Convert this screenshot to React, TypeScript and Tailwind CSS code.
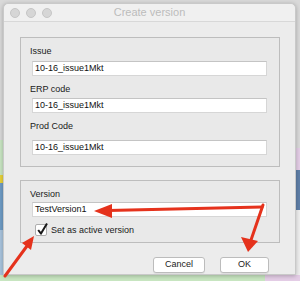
import React from "react";

const font = { fontFamily: '"Liberation Sans", Arial, sans-serif' };

function Field({ label, value, labelMt, inputMt }: { label: string; value: string; labelMt: string; inputMt: string }) {
  return (
    <div className="flex flex-col">
      <div className={`${labelMt} ml-[9px] h-[11px] text-[9px] leading-[11px] text-[#1a1a1a]`}>{label}</div>
      <div className={`${inputMt} ml-[11px] w-[235px] h-[15px] bg-white border border-[#d6d6d6] border-t-[#c4c4c4] flex items-center pl-[2px] text-[9px] leading-[11px] text-[#111]`}>
        {value}
      </div>
    </div>
  );
}

export default function App() {
  return (
    <div className="relative w-[300px] h-[281px] overflow-hidden bg-[#d9d9d9]" style={font}>
      {/* desktop wallpaper fragments */}
      <div className="absolute left-0 top-[140px] w-[4px] h-[35px] bg-[#c9e6c3]" />
      <div className="absolute left-0 top-[175px] w-[4px] h-[8px] bg-[#e8d23a]" />
      <div className="absolute left-0 top-[183px] w-[4px] h-[98px] bg-[#6f9cc6]" />
      <div className="absolute left-0 top-[230px] w-[4px] h-[51px] bg-[#a9c4dd]" />
      <div className="absolute left-0 top-[275px] w-[300px] h-[6px] bg-[#c8e6c1]" />
      <div className="absolute left-[265px] top-[275px] w-[35px] h-[6px] bg-[#e4cde6]" />
      <div className="absolute left-[296px] top-[148px] w-[4px] h-[22px] bg-[#e4cde6]" />
      <div className="absolute left-[296px] top-[170px] w-[4px] h-[40px] bg-[#5f7fa8]" />
      <div className="absolute left-[296px] top-[210px] w-[4px] h-[65px] bg-[#eeeeee]" />

      {/* window */}
      <div className="relative z-10 ml-[3px] mt-[3px] w-[293px] h-[272px] bg-[#ececec] border border-[#c9c9c9] rounded-t-[5px] shadow-[0_1px_4px_rgba(0,0,0,0.25)] flex flex-col">
        <div className="relative h-[18px] border-b border-[#d8d8d8] bg-[#f0f0f0] rounded-t-[5px] flex items-center">
          <div className="flex gap-[6px] ml-[6px]">
            <div className="w-[10px] h-[10px] rounded-full bg-[#d6d6d6] border border-[#c6c6c6]" />
            <div className="w-[10px] h-[10px] rounded-full bg-[#d6d6d6] border border-[#c6c6c6]" />
            <div className="w-[10px] h-[10px] rounded-full bg-[#d6d6d6] border border-[#c6c6c6]" />
          </div>
          <div className="absolute inset-0 flex items-center justify-center text-[11px] text-[#bcbcbc]">Create version</div>
        </div>

        <div className="flex flex-col pl-[16px]">
          {/* box 1 */}
          <div className="mt-[15px] w-[260px] h-[130px] border border-[#bdbdbd] bg-[#e9e9e9] flex flex-col">
            <Field label="Issue" value="10-16_issue1Mkt" labelMt="mt-[8px]" inputMt="mt-[4px]" />
            <Field label="ERP code" value="10-16_issue1Mkt" labelMt="mt-[8px]" inputMt="mt-[3px]" />
            <Field label="Prod Code" value="10-16_issue1Mkt" labelMt="mt-[8px]" inputMt="mt-[8px]" />
          </div>

          {/* box 2 */}
          <div className="mt-[13px] w-[260px] h-[63px] border border-[#bdbdbd] bg-[#e9e9e9] flex flex-col">
            <Field label="Version" value="TestVersion1" labelMt="mt-[8px]" inputMt="mt-[2px]" />
            <div className="mt-[7px] ml-[14px] flex items-center gap-[4px]">
              <div className="relative w-[12px] h-[12px] bg-white border border-[#aeaeae] rounded-[2px]">
                <svg className="absolute left-[0px] top-[-3px] overflow-visible" width="13" height="14" viewBox="0 0 13 14">
                  <path d="M2.2 8 L5 11.6 L11 1.5" fill="none" stroke="#1a1a1a" strokeWidth="2" strokeLinejoin="round" />
                </svg>
              </div>
              <span className="text-[9px] leading-[11px] text-[#1a1a1a]">Set as active version</span>
            </div>
          </div>

          {/* buttons */}
          <div className="mt-[14px] ml-[133px] flex gap-[15px]">
            <div className="w-[52px] h-[16px] bg-white border border-[#bcbcbc] rounded-[3px] shadow-[0_1px_0_rgba(0,0,0,0.06)] flex items-center justify-center text-[9px] text-[#222]">Cancel</div>
            <div className="w-[49px] h-[16px] bg-white border border-[#bcbcbc] rounded-[3px] shadow-[0_1px_0_rgba(0,0,0,0.06)] flex items-center justify-center text-[9px] text-[#222]">OK</div>
          </div>
        </div>
      </div>

      {/* annotation arrows */}
      <svg className="absolute inset-0 z-20 pointer-events-none" width="300" height="281" viewBox="0 0 300 281">
        <g stroke="#e5321c" strokeWidth="3" strokeLinecap="round" fill="none">
          <line x1="262" y1="207" x2="108" y2="210.5" />
          <line x1="5" y1="276" x2="27" y2="246" />
          <line x1="263" y1="205" x2="251" y2="240" />
        </g>
        <g fill="#e5321c">
          <polygon points="94,211 112,204 112,218" />
          <polygon points="34,236 22,243 31,250" />
          <polygon points="248,252 241,237 258,241" />
        </g>
      </svg>
    </div>
  );
}
